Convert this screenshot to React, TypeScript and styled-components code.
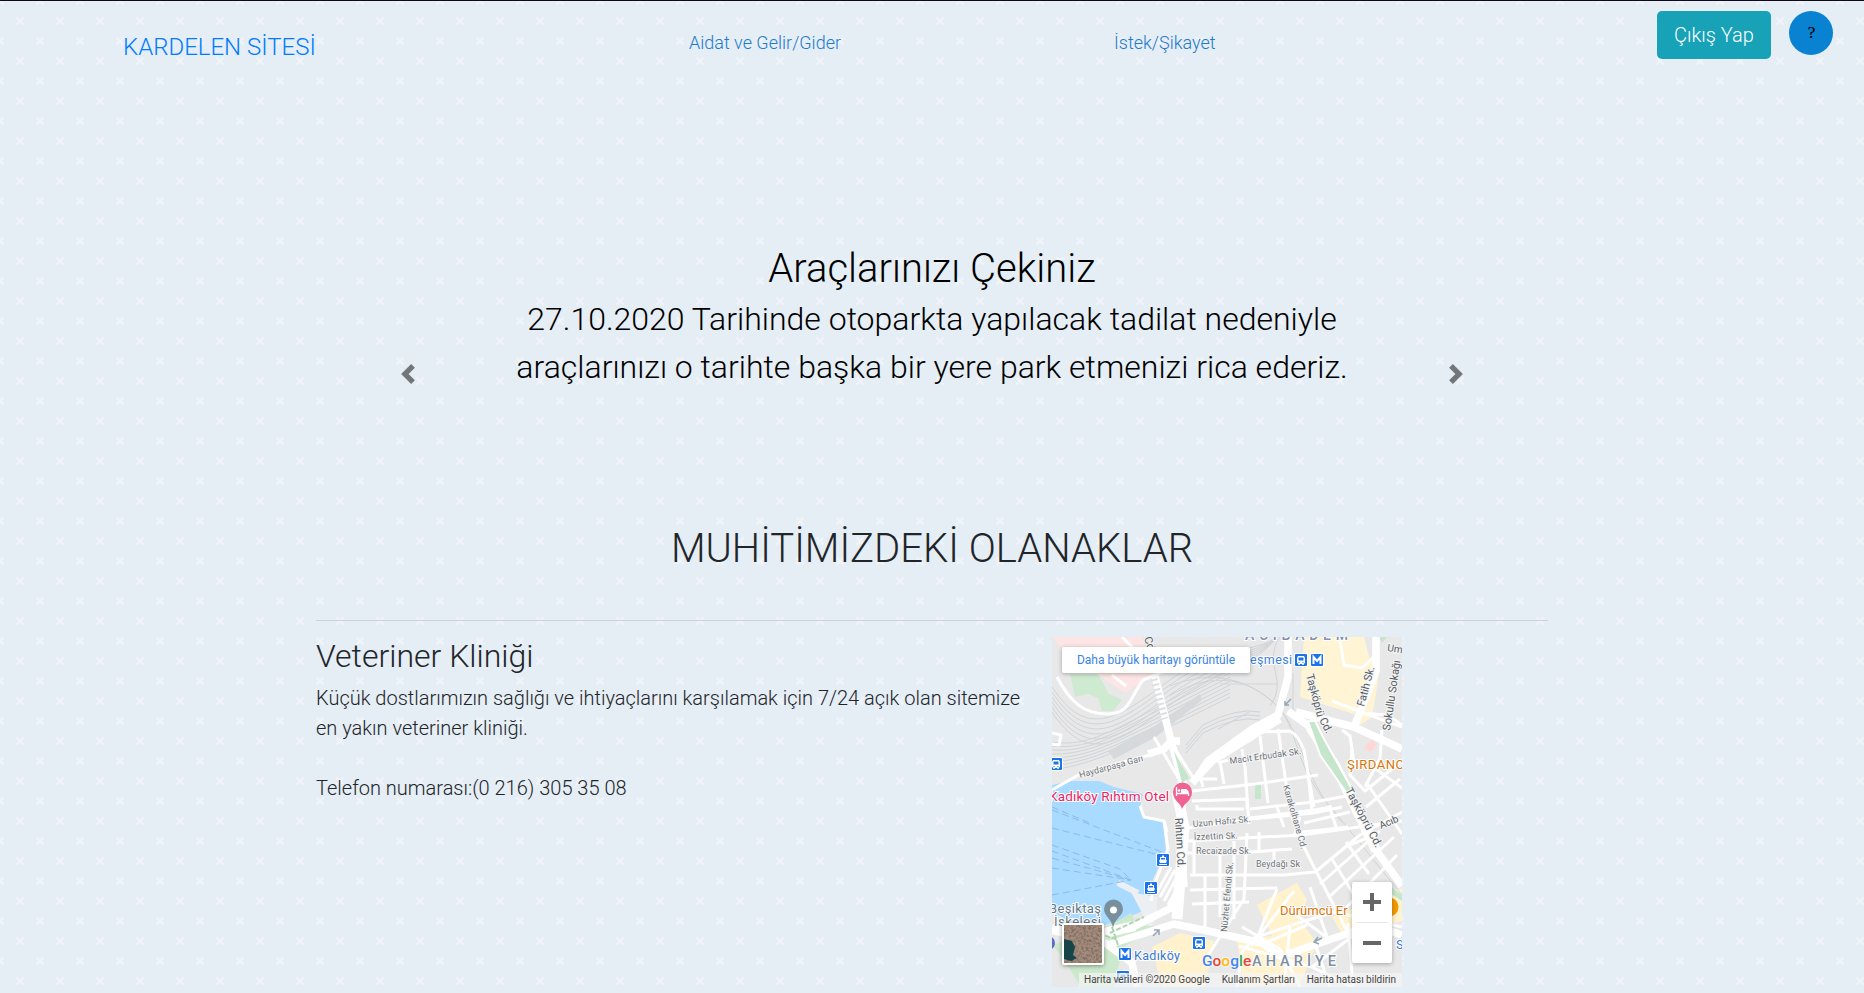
import React from 'react';
import styled, { createGlobalStyle } from 'styled-components';

const pattern =
  "url(\"data:image/svg+xml,%3Csvg xmlns='http://www.w3.org/2000/svg' width='40' height='40'%3E%3Cg stroke='%23f1f5f9' stroke-width='2' fill='none'%3E%3Cpath d='M16.5 17.5l7 7m0-7l-7 7M-3.5 -2.500l7 7m0-7l-7 7M36.500 -2.500l7 7m0-7l-7 7M-3.500 37.500l7 7m0-7l-7 7M36.500 37.500l7 7m0-7l-7 7'/%3E%3C/g%3E%3C/svg%3E\")";

const GlobalStyle = createGlobalStyle`
  * { box-sizing: border-box; }
  html, body { margin: 0; }
  body {
    height: 993px;
    overflow: hidden;
    background: #e5edf5 ${pattern};
    color: #212529;
    font: 300 20px/30px Roboto, sans-serif;
  }
`;

const Page = styled.div`
  height: 993px;
  overflow: hidden;
  border-top: 1px solid #100a18;
`;

const Header = styled.header`
  display: flex;
  height: 160px;
  align-items: flex-start;
`;

const Brand = styled.a`
  width: 689px;
  padding: 28px 0 0 123px;
  color: #007bff;
  font-size: 24px;
  line-height: 36px;
`;

const NavLink = styled.a<{ $width: number }>`
  width: ${p => p.$width}px;
  padding-top: 27px;
  color: #1c7bcb;
  font-size: 18px;
`;

const Logout = styled.button`
  width: 114px;
  height: 48px;
  margin: 10px 18px 0 0;
  padding: 0;
  border: 0;
  border-radius: 5px;
  background: #17a2b8;
  color: #fff;
  font: 300 20px/48px Roboto, sans-serif;
`;

const Help = styled.button`
  width: 44px;
  height: 44px;
  margin-top: 10px;
  padding: 0 0 0 1px;
  border: 0;
  border-radius: 50%;
  background: #0a82d2;
  color: #000;
  font: 400 17px/44px "Liberation Serif", serif;
  -webkit-text-stroke: 0.2px #000;
`;

const Carousel = styled.section`
  display: flex;
  justify-content: space-between;
  height: 346px;
  width: 1068px;
  margin: 0 auto;
`;

const Arrow = styled.svg`
  width: 20px;
  height: 20px;
  margin-top: 203px;
  fill: #737679;
`;

const Slide = styled.div`
  padding-top: 84px;
  text-align: center;
  color: #000;
  font-size: 32px;
  line-height: 48px;
`;

const Title = styled.h1`
  margin: 0 0 2px;
  font-size: 40px;
  font-weight: 300;
  line-height: 48px;
`;

const Section = styled.main`
  width: 1232px;
  margin: 0 auto;
`;

const SectionTitle = styled.h2`
  height: 113px;
  margin: 0;
  padding-top: 18px;
  font-size: 40px;
  font-weight: 300;
  line-height: 48px;
  text-align: center;
`;

const Place = styled.article`
  display: flex;
  justify-content: space-between;
  border-top: 1px solid #cbd2da;
`;

const Details = styled.div`
  width: 720px;
  padding-top: 16px;
`;

const PlaceName = styled.h3`
  margin: 0 0 8px;
  font-size: 32px;
  font-weight: 300;
  line-height: 38px;
`;

const Text = styled.p`
  margin: 0 0 30px;
`;

const MapFrame = styled.div`
  position: relative;
  width: 350px;
  height: 350px;
  margin: 16px 146px 0 0;
  overflow: hidden;
  background: #e8e8e9;
`;

const MapDrawing = styled.svg`
  display: block;
  font-family: Roboto, sans-serif;
  font-weight: 400;
`;

const LargerMap = styled.a`
  position: absolute;
  left: 10px;
  top: 10px;
  width: 188px;
  height: 26px;
  border-radius: 2px;
  background: #fff;
  box-shadow: 0 1px 4px rgba(0, 0, 0, 0.3);
  color: #3a84df;
  font: 400 12px/26px Roboto, sans-serif;
  text-align: center;
`;

const ZoomControl = styled.div`
  position: absolute;
  right: 10px;
  top: 245px;
  width: 40px;
  height: 81px;
  padding: 0 5px;
  border-radius: 2px;
  background: #fff;
  box-shadow: 0 1px 4px rgba(0, 0, 0, 0.3);
`;

const ZoomButton = styled.div`
  display: flex;
  height: 40px;
  align-items: center;
  justify-content: center;
  & + & { border-top: 1px solid #e6e6e6; }
`;

const Satellite = styled.svg`
  position: absolute;
  left: 10px;
  top: 286px;
  width: 42px;
  height: 42px;
  border: 2px solid #fff;
  border-radius: 2px;
  box-shadow: 0 1px 4px rgba(0, 0, 0, 0.4);
`;

const Attribution = styled.div`
  position: absolute;
  right: 0;
  bottom: 0;
  display: flex;
  width: 323px;
  height: 14px;
  padding: 0 6px 0 5px;
  justify-content: space-between;
  background: rgba(245, 245, 245, 0.7);
  color: #444;
  font: 400 10px/14px Roboto, sans-serif;
  white-space: nowrap;
`;

const Logo = styled.div`
  position: absolute;
  left: 150px;
  top: 314px;
  font: 500 15.5px/20px Roboto, sans-serif;
  text-shadow: 0 0 2px #fff, 0 0 2px #fff;
`;

const Letter = styled.span<{ $color: string }>`
  color: ${p => p.$color};
`;

const streets = [
  'M0 153L30 136L98 118L122 106',
  'M5 40C18 65 32 77 55 77S77 62 91 43L115 33',
  'M60 38L74 49', 'M70 0L92 22', 'M0 107L7 108L9 98L0 96',
  'M102 100L127 142L128 155', 'M118 104L142 142L165 142',
  'M148 138L151 150M168 124L172 147',
  'M140 154L203 147L266 138M256 137L260 174',
  'M166 126L176 123', 'M88 169L92 180L112 184L115 195',
  'M140 164L195 162V172M145 168V172H192',
  'M190 112L193 130L197 187M208 99L216 166M226 92L238 173',
  'M208 95L238 94Q246 98 252 113L262 170',
  'M198 172L262 165L300 158M198 181L262 173L280 170',
  'M136 191L198 182L262 176L290 170M136 204L250 198L350 184',
  'M136 216L170 217L240 212',
  'M138 238L232 238L262 235M138 253L225 251M140 267L197 265',
  'M153 238V290M168 212V280M182 204V282M195 196L192 262L155 320',
  'M207 195V214M222 212V228M142 204V238',
  'M238 173L246 198L265 236L293 290L310 312M248 180L242 200',
  'M242 196L296 190M252 186L298 175M232 190L225 170M277 168L285 193',
  'M262 236L308 198L350 175M268 247L328 194M277 260L342 200M289 276L345 218',
  'M280 222L302 258M294 205L317 237M293 210L315 201',
  'M225 252L206 299M242 254L199 309M258 250L275 300M232 269L273 299',
  'M208 299L238 289L232 349M240 288L282 275L350 290',
  'M190 290L228 312L248 350M205 298L190 315L185 350M213 306L255 288',
  'M187 309L260 330L300 350M260 330L310 292M262 304L278 350M296 286L301 349',
  'M300 112L298 138L313 154L350 124', 'M314 145L350 197M324 132L350 151M314 170L348 142',
  'M280 64L350 90M309 76L336 78L350 88M290 93L298 99L303 132M330 93L328 121L313 150',
  'M288 4L292 28L310 31L322 20',
];

const mainRoads = [
  'M103 39L119 104L132 149L128 184L132 250',
  'M140 146L160 124L228 82',
  'M96 117L112 112L119 104L128 104',
  'M144 142L156 124L200 92L226 78L236 40V0',
  'M236 74L258 90L284 130L324 213L350 249',
  'M244 75L302 90L350 112M302 90L324 34L324 0',
  'M0 292L34 300L83 289L121 270L131 235L131 190',
  'M48 302L80 326L85 350M55 308L122 287L156 294L210 306L242 329',
  'M236 317L320 288L350 298',
];

const MapLabels = () => (
  <g fill="#6d7379" stroke="#f4f4f4" strokeWidth="2" paintOrder="stroke" fontSize="9">
    <text x="28" y="141" transform="rotate(-15 28 141)" textLength="66">Haydarpaşa Garı</text>
    <text x="178" y="127" transform="rotate(-8 178 127)" textLength="72">Macit Erbudak Sk.</text>
    <text x="141" y="190" transform="rotate(-5 141 190)" textLength="58">Uzun Hafız Sk.</text>
    <text x="142" y="203" transform="rotate(-2 142 203)" textLength="44">İzzettin Sk.</text>
    <text x="144" y="217" textLength="55">Recaizade Sk.</text>
    <text x="204" y="230" textLength="44">Beydağı Sk</text>
    <text x="231" y="149" transform="rotate(74 231 149)" textLength="66">Karakolhane Cd.</text>
    <text x="175" y="295" transform="rotate(-85 175 295)" textLength="70">Nüzhet Efendi Sk.</text>
    <g fill="#555c63" fontSize="11">
      <text x="254" y="38" transform="rotate(75 254 38)" textLength="44">Taşköprü</text>
      <text x="267" y="83" transform="rotate(62 267 83)">Cd.</text>
      <text x="293" y="153" transform="rotate(62 293 153)" textLength="66">Taşköprü Cd.</text>
      <text x="123" y="181" transform="rotate(87 123 181)" textLength="50">Rıhtım Cd.</text>
      <text x="312" y="70" transform="rotate(-75 312 70)" textLength="41">Fatih Sk.</text>
      <text x="338" y="94" transform="rotate(-81.500 338 94)" textLength="71" lengthAdjust="spacingAndGlyphs">Sokullu Sokağı</text>
      <text x="335" y="14" transform="rotate(8 335 14)" fontSize="10">Um</text>
      <text x="329" y="192" transform="rotate(-23 329 192)" fontSize="10">Acıb</text>
      <text x="92" y="1" transform="rotate(72 92 1)">Cd.</text>
    </g>
  </g>
);

const StationIcon = ({ x, y, kind }: { x: number; y: number; kind: 'M' | 'tram' | 'ferry' }) => (
  <g transform={`translate(${x} ${y})`}>
    <rect x="-1" y="-1" width="14" height="14" rx="2" fill="#fff" />
    <rect width="12" height="12" rx="1" fill="#1a73e8" />
    {kind === 'M' && <path d="M2.500 10V3L6 7L9.500 3V10" fill="none" stroke="#fff" strokeWidth="2" />}
    {kind === 'tram' && <path fillRule="evenodd" fill="#fff" d="M3 2H9L10 4V9L8.500 10L9 11H7.500L7 10H5L4.500 11H3L3.500 10L2 9V4ZM3.500 3.500V6.500H8.500V3.500ZM3.500 8H4.500V9H3.500ZM7.500 8H8.500V9H7.500Z" />}
    {kind === 'ferry' && <path fillRule="evenodd" fill="#fff" d="M5 1.500H7V3H9V6L10 6.500L9 9H3L2 6.500L3 6V3H5ZM4 4V5.500H8V4ZM2 10H10V11H2Z" />}
  </g>
);

const MapCanvas = () => (
  <MapDrawing width="350" height="350" viewBox="0 0 350 350">
    <rect width="350" height="350" fill="#e8e8e9" />
    <path d="M0 0H90L96 20L101 37L73 56L42 35L22 26Z" fill="#fce5e4" />
    <path d="M18 37H46L57 57L70 63L61 74H50L46 61L36 57L23 60Z" fill="#ceead0" />
    <path d="M252 0H312L320 32L302 77L248 60ZM318 20L328 31L320 80L302 92Z" fill="#fff4d3" />
    <path d="M205 268L245 246L255 263L247 282L265 306L248 347L192 350L185 303L220 299ZM100 310L128 296L162 304L153 350H110ZM280 280L350 251V284L292 300Z" fill="#fff2cd" />
    <path d="M203 147H209V162H203ZM327 0H335L330 6ZM332 252L350 264V258L339 250Z" fill="#c5e6cb" />
    <path d="M0 148L19 144L47 144L62 150L91 157L88 169L95 181L111 185L114 215L101 242L103 269L62 286L33 292L0 275Z" fill="#a9daff" />
    <path d="M66 246L83 256L105 260V281L98 291L79 255L64 247Z" fill="#edf0f2" />
    <path d="M0 308L40 295L64 285L79 276L85 289L110 289L71 310L62 350H29L11 321Z" fill="#cde9cd" />

    <g stroke="#d0d4d7" strokeWidth="1" fill="none">
      {[0, 5, 10, 15, 20, 25].map(n => (
        <path key={n} d={`M0 ${50 + n}C35 ${103 + n} 65 ${82 + n} 115 ${45 + n}S205 ${16 + n / 2} 225 0`} />
      ))}
      {[0, 4, 8, 12, 16, 20, 24, 28].map(n => (
        <path key={n} d={`M0 ${105 + n}C45 ${112 + n / 2} 75 ${83 + n} 178 ${32 + n}`} />
      ))}
      {[0, 4, 8].map(n => (
        <path key={n} d={`M134 ${108 + n}L151 ${88 + n}Q185 ${70 + n} 208 ${75 + n}`} />
      ))}
      <path d="M118 49C160 32 195 42 222 66S238 128 282 174L350 258M117 59C165 31 201 44 226 70S248 139 290 185M228 0C210 26 237 44 218 69M241 36V82M166 92L197 75M168 47H226" />
    </g>
    <path d="M56 114L103 89L148 57L150 63L104 100L62 122Z" fill="#d5d9dc" />
    <g stroke="#fff" strokeWidth="3" fill="none" strokeLinejoin="round">
      {streets.map(d => <path key={d} d={d} />)}
      <path d="M112 184L116 212L103 246L99 264M119 230L104 257M123 233L108 260M127 236L112 264M131 240L116 268" />
    </g>
    <g stroke="#fff" strokeWidth="7.500" fill="none" strokeLinejoin="round">
      {mainRoads.map(d => <path key={d} d={d} />)}
      <path d="M125 155L132 190L125 282" strokeWidth="11" />
      <path d="M0 292L34 300L83 289M258 90L284 130L324 213" strokeWidth="10" />
    </g>
    <path d="M122 114L137 141L130 146Z" fill="#c5e6cb" />
    <path d="M256 84L263 84L272 102L301 154L296 158L268 118Z" fill="#c5e6cb" stroke="#fff" strokeWidth="2" />
    <path d="M102 42L113 82" stroke="#dcdfe2" strokeWidth="7" strokeDasharray="2 3" />
    <path d="M66 246L86 256" stroke="#edf0f2" strokeWidth="6" />
    <g stroke="#8eb9ec" strokeWidth="1" strokeDasharray="7 4" fill="none">
      <path d="M0 170L40 187M0 191L115 220M0 173L115 217M0 208L68 232L79 243M0 214L79 243M0 221L79 243M0 231L79 243M0 258L79 243" />
    </g>
    <path d="M58 296L92 280M60 290L70 320M40 294L66 303M12 310L28 322" stroke="#acd6af" strokeWidth="2" strokeDasharray="5 2" fill="none" />
    <g stroke="#91a5b4" strokeWidth="1.500" fill="none">
      <path d="M233 68L239 62M233 64V68H237M262 305L270 301M266 300L262 305L267 307M101 299L107 293M102 293H107V298" />
    </g>
    <path d="M314 108L321 103L324 108L319 115L313 112Z" fill="#ffd6d3" />
    <MapLabels />
    <g stroke="#fff" strokeWidth="2" paintOrder="stroke">
      <text x="193" y="3" fontSize="14" fontWeight="500" textLength="103" fill="#8490b0">ACIBADEM</text>
      <text x="198" y="27" fontSize="12.500" textLength="42" fill="#3b7ddd">eşmesi</text>
      <text x="-3" y="164" fontSize="13.500" fill="#e91e63" textLength="120">Kadıköy Rıhtım Otel</text>
      <text x="295" y="132" fontSize="13" fill="#d77408" textLength="57">ŞIRDANC</text>
      <text x="228" y="278" fontSize="13" fill="#d77408">Dürümcü Er</text>
      <text x="-3" y="276" fontSize="13" textLength="52" fill="#607987">Beşiktaş</text>
      <text x="2" y="289" fontSize="13" textLength="47" fill="#607987">İskelesi</text>
      <text x="82" y="323" fontSize="12.500" textLength="46" fill="#3978cf">Kadıköy</text>
      <text x="200" y="329" fontSize="14.500" fontWeight="500" textLength="84" fill="#7c8da5">AHARİYE</text>
      <text x="344" y="312" fontSize="12.500" fill="#3978cf">S</text>
    </g>
    <StationIcon x={243} y={17} kind="tram" />
    <StationIcon x={259} y={17} kind="M" />
    <StationIcon x={-2} y={121} kind="tram" />
    <StationIcon x={105} y={217} kind="ferry" />
    <StationIcon x={93} y={245} kind="ferry" />
    <StationIcon x={67} y={311} kind="M" />
    <StationIcon x={141} y={300} kind="tram" />
    <StationIcon x={65} y={334} kind="tram" />
    <path d="M130 172C129 166 121 164 121 155A9.500 9.500 0 0 1 140 155C140 164 132 166 130 172Z" fill="#f06292" />
    <path d="M124.500 150V159M124.500 156.500H136.500V159" fill="none" stroke="#fff" strokeWidth="1.300" />
    <path d="M129 152H134L136.500 154V156H129Z" fill="#fff" />
    <circle cx="127" cy="153.500" r="1.300" fill="#fff" />
    <path d="M61 291C60 282 52 279 52 272A9.500 9.500 0 0 1 71 272C71 279 62 282 61 291Z" fill="#78909c" />
    <circle cx="61.500" cy="273" r="3.500" fill="#fff" />
    <circle cx="337" cy="270" r="9.500" fill="#f29900" />
    <circle cx="-4" cy="306" r="7" fill="#5c6bc0" />
  </MapDrawing>
);

const logoLetters: [string, string][] = [
  ['G', '#4285f4'], ['o', '#ea4335'], ['o', '#fbbc05'],
  ['g', '#4285f4'], ['l', '#34a853'], ['e', '#ea4335'],
];

export default function App() {
  return (
    <>
      <GlobalStyle />
      <Page>
        <Header>
          <Brand>KARDELEN SİTESİ</Brand>
          <NavLink $width={425}>Aidat ve Gelir/Gider</NavLink>
          <NavLink $width={543}>İstek/Şikayet</NavLink>
          <Logout>Çıkış Yap</Logout>
          <Help>?</Help>
        </Header>
        <Carousel>
          <Arrow viewBox="0 0 8 8"><path d="M5.250 0l-4 4 4 4 1.500-1.500L4.250 4l2.500-2.500L5.250 0z" /></Arrow>
          <Slide>
            <Title>Araçlarınızı Çekiniz</Title>
            27.10.2020 Tarihinde otoparkta yapılacak tadilat nedeniyle<br />
            araçlarınızı o tarihte başka bir yere park etmenizi rica ederiz.
          </Slide>
          <Arrow viewBox="0 0 8 8"><path d="M2.750 0l-1.500 1.500L3.750 4l-2.500 2.500L2.750 8l4-4-4-4z" /></Arrow>
        </Carousel>
        <Section>
          <SectionTitle>MUHİTİMİZDEKİ OLANAKLAR</SectionTitle>
          <Place>
            <Details>
              <PlaceName>Veteriner Kliniği</PlaceName>
              <Text>Küçük dostlarımızın sağlığı ve ihtiyaçlarını karşılamak için 7/24 açık olan sitemize en yakın veteriner kliniği.</Text>
              <Text>Telefon numarası:(0 216) 305 35 08</Text>
            </Details>
            <MapFrame>
              <MapCanvas />
              <Logo>{logoLetters.map(([c, color], i) => <Letter key={i} $color={color}>{c}</Letter>)}</Logo>
              <LargerMap>Daha büyük haritayı görüntüle</LargerMap>
              <Satellite viewBox="0 0 38 38">
                <defs>
                  <filter id="ground" x="0" y="0" width="100%" height="100%">
                    <feTurbulence type="fractalNoise" baseFrequency="0.4" numOctaves="3" result="noise" />
                    <feColorMatrix in="noise" values="0 0 0 0 0.2  0 0 0 0 0.15  0 0 0 0 0.12  3 0 0 0 -1.200" result="grain" />
                    <feMerge><feMergeNode in="SourceGraphic" /><feMergeNode in="grain" /></feMerge>
                  </filter>
                </defs>
                <rect width="38" height="38" fill="#a48b7b" filter="url(#ground)" />
                <path d="M0 14L8 16L11 22L9 30L13 33L7 36L0 34Z" fill="#164448" />
              </Satellite>
              <ZoomControl>
                <ZoomButton><svg width="18" height="18"><path d="M9 0V18M0 9H18" stroke="#666" strokeWidth="4" /></svg></ZoomButton>
                <ZoomButton><svg width="18" height="18"><path d="M0 9H18" stroke="#666" strokeWidth="4" /></svg></ZoomButton>
              </ZoomControl>
              <Attribution>
                <span>Harita verileri ©2020 Google</span>
                <span>Kullanım Şartları</span>
                <span>Harita hatası bildirin</span>
              </Attribution>
            </MapFrame>
          </Place>
        </Section>
      </Page>
    </>
  );
}
